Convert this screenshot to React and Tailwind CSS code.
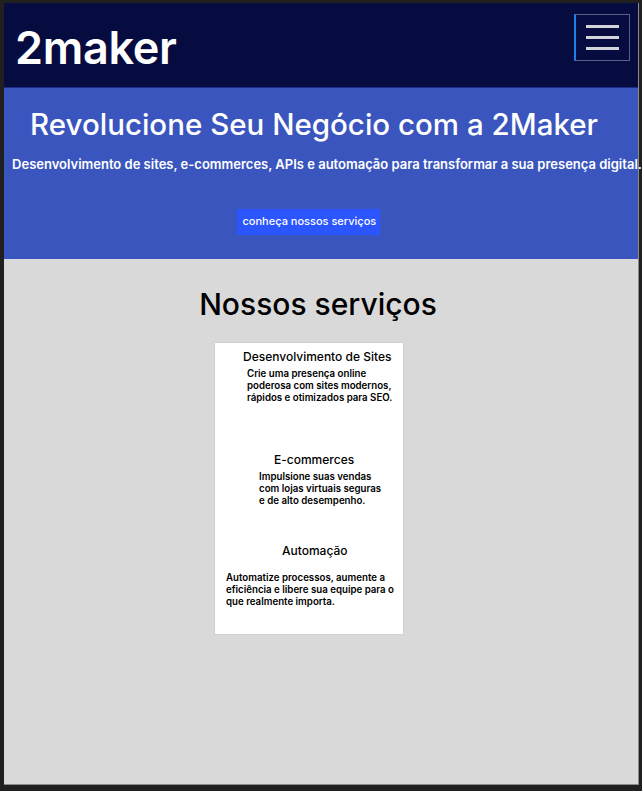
const services = [
  {
    title: "Desenvolvimento de Sites",
    titleClass: "pl-[28px]",
    text: "Crie uma presença online poderosa com sites modernos, rápidos e otimizados para SEO.",
    textClass: "ml-[32px] w-[150px] mt-[4px]",
    gap: "h-[49px]",
  },
  {
    title: "E-commerces",
    titleClass: "pl-[59px]",
    text: "Impulsione suas vendas com lojas virtuais seguras e de alto desempenho.",
    textClass: "ml-[44px] w-[128px] mt-[4px]",
    gap: "h-[37px]",
  },
  {
    title: "Automação",
    titleClass: "pl-[67px]",
    text: "Automatize processos, aumente a eficiência e libere sua equipe para o que realmente importa.",
    textClass: "ml-[11px] w-[178px] mt-[14px]",
    gap: "",
  },
];

export default function App() {
  return (
    <div className="bg-[#202020] pt-[3px] pl-[4px] pr-[3px] pb-[6px] font-['Inter',sans-serif]">
      <div className="min-h-[782px] flex flex-col bg-[#d9d9d9] border-r border-b border-[#8a8a8a]">
        <header className="h-[85px] bg-[#060c3f] flex items-start justify-between pl-[11px] pr-[8px] border-b border-[#1e2a8a]">
          <h1 className="text-white text-[45px] font-semibold leading-none mt-[22px] tracking-[-0.3px]">2maker</h1>
          <button className="mt-[11px] w-[56px] h-[47px] border border-[#5a6088] border-l-2 border-l-[#1f7fe8] flex flex-col items-center justify-center gap-[8px]">
            <span className="block w-[33px] h-[3px] bg-[#d4d4dc]" />
            <span className="block w-[33px] h-[3px] bg-[#d4d4dc]" />
            <span className="block w-[33px] h-[3px] bg-[#d4d4dc]" />
          </button>
        </header>

        <section className="h-[171px] bg-[#3a55be] flex flex-col items-center text-white">
          <h2 className="text-[29.5px] font-medium leading-none mt-[22px] pr-[14px]">
            Revolucione Seu Negócio com a 2Maker
          </h2>
          <p className="text-[13px] font-semibold leading-none mt-[18px] whitespace-nowrap pl-[12px]">
            Desenvolvimento de sites, e-commerces, APIs e automação para transformar a sua presença digital.
          </p>
          <button className="mt-[38px] h-[26px] w-[143px] bg-[#2a55ff] text-[11px] font-medium text-white text-left pl-[6px] mr-[26px]">
            conheça nossos serviços
          </button>
        </section>

        <section className="flex-1 flex flex-col items-center">
          <h2 className="text-[30px] font-medium text-black leading-none mt-[30px] mr-[6px]">Nossos serviços</h2>
          <div className="mt-[23px] mr-[24px] w-[190px] bg-white border border-[#d0d0d0] pt-[7px] pb-[26px] text-black">
            {services.map((s) => (
              <div key={s.title}>
                <h3 className={`text-[12px] font-medium leading-[14px] ${s.titleClass}`}>{s.title}</h3>
                <p className={`text-[9.7px] font-semibold leading-[12px] ${s.textClass}`}>{s.text}</p>
                {s.gap && <div className={s.gap} />}
              </div>
            ))}
          </div>
        </section>
      </div>
    </div>
  );
}
